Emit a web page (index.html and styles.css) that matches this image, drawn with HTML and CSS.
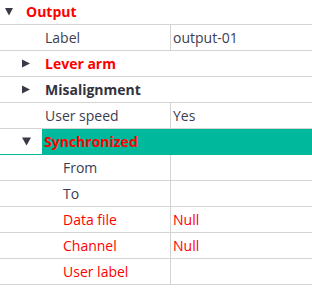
FILE: index.html
```html
<!DOCTYPE html>
<html>
<head>
<meta charset="utf-8">
<link rel="stylesheet" href="styles.css">
</head>
<body>
<div class="tree">
  <div class="row cat l0">
    <svg class="arrow" width="8" height="8" viewBox="0 0 8 8"><polygon points="0,0 8,0 4,7.5" /></svg>
    <span class="name red">Output</span>
  </div>
  <div class="row prop">
    <div class="key l1">Label</div>
    <div class="val">output-01</div>
  </div>
  <div class="row cat l1">
    <svg class="arrow" width="9" height="9" viewBox="0 0 9 9"><polygon points="0,0.5 8,4.5 0,8.5" /></svg>
    <span class="name red">Lever arm</span>
  </div>
  <div class="row cat l1">
    <svg class="arrow" width="9" height="9" viewBox="0 0 9 9"><polygon points="0,0.5 8,4.5 0,8.5" /></svg>
    <span class="name dark">Misalignment</span>
  </div>
  <div class="row prop">
    <div class="key l1">User speed</div>
    <div class="val">Yes</div>
  </div>
  <div class="row cat l1 selected">
    <svg class="arrow" width="9" height="9" viewBox="0 0 9 9"><polygon points="0,0.5 9,0.5 4.5,8.5" /></svg>
    <span class="name red sel">Synchronized</span>
  </div>
  <div class="row prop">
    <div class="key l2">From</div>
    <div class="val"></div>
  </div>
  <div class="row prop">
    <div class="key l2">To</div>
    <div class="val"></div>
  </div>
  <div class="row prop">
    <div class="key l2 warn">Data file</div>
    <div class="val warn">Null</div>
  </div>
  <div class="row prop">
    <div class="key l2 warn">Channel</div>
    <div class="val warn">Null</div>
  </div>
  <div class="row prop">
    <div class="key l2 warn">User label</div>
    <div class="val"></div>
  </div>
</div>
</body>
</html>
```

FILE: styles.css
```css
html, body {
  margin: 0;
  padding: 0;
  background: #ffffff;
}
body {
  font-family: "Open Sans", "Noto Sans", sans-serif;
  font-size: 14px;
  color: #3d3d50;
  overflow: hidden;
}
.tree {
  margin-top: -1px;
  width: 312px;
}
.row {
  display: flex;
  align-items: center;
  height: 25px;
  border-bottom: 1px solid #d4d4d4;
  white-space: nowrap;
}
.prop {
  align-items: stretch;
}
.key {
  box-sizing: border-box;
  border-right: 1px solid #d4d4d4;
  display: flex;
  align-items: center;
  flex: none;
  width: 171px;
}
.key.l1 { padding-left: 45px; }
.key.l2 { padding-left: 63px; }
.val {
  padding-left: 2px;
  display: flex;
  align-items: center;
  flex: 1;
}
.warn { color: #ff0000; }
.arrow {
  fill: #3a3a46;
  flex: none;
}
.cat.l0 { padding-left: 5px; }
.cat.l0 .arrow { margin-right: 13px; }
.cat.l1 { padding-left: 22px; }
.cat.l1 .arrow { margin-right: 14px; }
.cat .name { font-weight: bold; }
.red { color: #ff0000; }
.dark { color: #33333f; }
.cat.l1.selected {
  border-bottom-color: #00b99c;
}
.cat.l1.selected .arrow { margin-right: 11px; }
.name.sel {
  background: #00b99c;
  align-self: stretch;
  flex: 1;
  display: flex;
  align-items: center;
  padding-left: 2px;
  margin-bottom: -1px;
  padding-bottom: 1px;
}
```
